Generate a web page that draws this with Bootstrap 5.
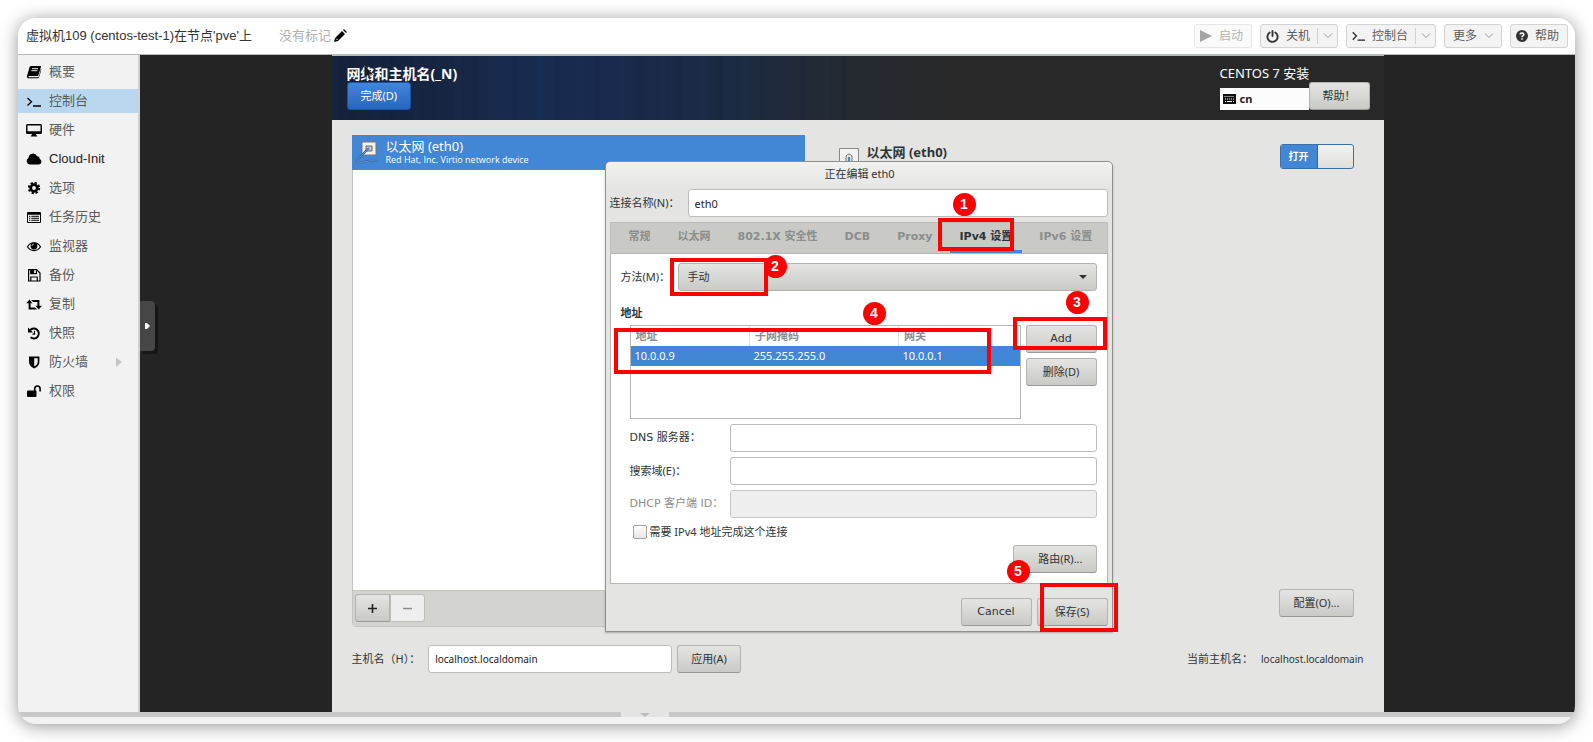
<!DOCTYPE html>
<html lang="zh-CN">
<head>
<meta charset="utf-8">
<meta name="viewport" content="width=device-width, initial-scale=1">
<title>centos-test-1 - 控制台</title>
<link href="https://cdn.jsdelivr.net/npm/bootstrap@5.3.0/dist/css/bootstrap.min.css" rel="stylesheet">
<style>
body{background:#fff;font:13px/20px "Liberation Sans","Noto Sans CJK SC",sans-serif;color:#000}
.shell{min-height:calc(100vh - 36px);margin:18px;border-radius:18px;background:#f2f2f2;box-shadow:0 2px 18px rgba(0,0,0,.42)}
.topbar{height:37px;background:#fff;border-bottom:1px solid #b9b9b9;padding:0 7px 0 8px;color:#333}
.muted{color:#b0b0b0;margin-left:27px;margin-right:2px}
.tool{height:24px;padding:0 5px;gap:7px;border:1px solid #d3d3d3;border-radius:3px;background:#f3f3f3;color:#5c5c5c;font-size:12px;line-height:20px;display:inline-flex;align-items:center;white-space:nowrap}
.tool.w-s{width:58px}
.tool.w-m{width:78px}
.tool.w-l{width:90px}
.tool svg{flex:none}
.tool:disabled{background:#fafafa;border-color:#e6e6e6;color:#b4b4b4;opacity:1}
.tool .split{border-left:1px solid #d0d0d0;height:16px;display:flex;align-items:center;padding-left:5px}
.side{width:122px;flex:none;border-right:2px solid #d0d0d0;padding:5px 0}
.side a{height:24px;margin-bottom:5px;padding-left:8px;color:#5a5a5a;text-decoration:none}
.side a.latin{color:#222}
.side a.active{background:#b9d8ef}
.side svg{width:16px;height:16px;margin-right:7px;flex:none}
.screen{background:#242424}
.drawer{top:246px;left:0;width:15px;height:50px;border:0;background:#464646;border-radius:0 4px 4px 0;box-shadow:3px 3px 0 #161616}
.drawer svg{display:block}
.vnc{width:100%;max-width:1052px;border-top:1px solid #b5bcbd;background:#e4e4e2;color:#2e3436;font:11px/16px "Noto Sans","Noto Sans CJK SC",sans-serif}
.vhead{padding:9px 14px 10px 15px;color:#fff;background:repeating-linear-gradient(90deg,rgba(30,70,130,.05) 0 6px,transparent 6px 17px,rgba(5,15,40,.07) 17px 22px,transparent 22px 41px) 0 0/520px 100% no-repeat,linear-gradient(90deg,#16213a 0,#172644 130px,#182c50 210px,#19294a 300px,#1c2a42 400px,#232a33 500px,#282828 620px)}
.vtitle{font-size:13px;line-height:17px}
.vtitle.page-name{font-size:14px}
.pointer{left:17px;top:0}
.gbtn{height:28px;border:1px solid #b3b3b0;border-bottom-color:#989896;border-radius:3px;background:linear-gradient(#e4e4e2,#c9c9c6);color:#2e3436;padding:0 13px;font-size:11px;line-height:16px}
.gbtn.primary{background:linear-gradient(#3f87dc,#2767be);border-color:#1d53a0;color:#fff}
.kbd-box{width:89px;height:22px;background:#fcfcfc;color:#222;padding-left:3px;font-weight:700}
.vbody{padding:15px 20px 39px}
.devlist{width:453px;flex:none;border:1px solid #c4c4c1;border-radius:0 0 4px 4px;background:#fff}
.dev{height:35px;margin:-1px -1px 0;background:#4286d6;color:#fff;padding-left:3px}
.dev svg{margin-right:7px}
.dev .big{font-size:13px;line-height:15px}
.dev .tiny{font:9px/12px "Open Sans","Noto Sans",sans-serif}
.devbar{height:36px;padding:3px 2px;background:#d3d4cf;border-top:1px solid #c6c7c2}
.sq{width:35px;padding:0;border-radius:3px 0 0 3px}
.sq:disabled{border-radius:0 3px 3px 0;background:#eee;border-color:#bcbcba;color:#8b8e8f}
.sq svg{display:block;margin:auto}
.detail{padding:9px 10px 10px 34px}
.onoff{width:74px;height:25px;border:1px solid #3c6fa8;border-radius:3px;background:linear-gradient(#f2f2f1,#dfdfdd);overflow:hidden}
.onoff b{width:37px;background:#4286d6;color:#fff;border-right:1px solid #3465a4;line-height:22px;text-align:center;font-size:10px}
.gin{height:28px;border:1px solid #bcbcba;border-radius:3px;background:#fff;padding:0 6px;font-size:11px;line-height:16px;color:#1d2123}
.gin:disabled{background:#eee;border-color:#c6c6c4}
.hostrow{margin-top:18px}
.hostrow .gin{width:244px;margin-right:5px}
.hostrow .gin,.hostrow .host{font-size:10px}
.hostrow .host{margin-left:8px}
.dlg{left:273px;top:105px;width:508px;border:1px solid #8f8f8d;border-radius:5px 5px 0 0;background:linear-gradient(#f2f2f1,#e4e4e2 28px);padding:0 4px 5px;box-shadow:0 1px 2px rgba(0,0,0,.25)}
.dlg-title{height:23px;margin-bottom:4px;padding-left:2px}
.w-name{width:78px}
.tabs{height:31px;margin-top:5px;padding-left:8px;gap:7px;background:#c9c9c6;border:1px solid #bcbcb9;border-bottom:0;font-weight:700;font-family:"DejaVu Sans","Noto Sans CJK SC",sans-serif}
.tabs button{border:0;background:none;color:#8b8d8b;font-weight:700;padding:0 10px;border-bottom:3px solid transparent;white-space:nowrap}
.tabs button.active{color:#2e3436;border-bottom-color:#4286d6}
.pane{border:1px solid #b6b6b3;background:#fff;padding:9px 10px 10px}
.w-method{width:57px}
.gsel{appearance:none;height:28px;border:1px solid #b3b3b0;border-radius:3px;color:#2e3436;padding:0 9px;font-size:11px;background:url("data:image/svg+xml,%3Csvg xmlns='http://www.w3.org/2000/svg' width='8' height='5'%3E%3Cpath d='M0 0h8L4 4z' fill='%232e3436'/%3E%3C/svg%3E") no-repeat right 9px center,linear-gradient(#e4e4e2,#c9c9c6)}
.h-addr{margin:14px 0 4px;font-size:11px;line-height:16px;font-weight:700}
.inset{padding-left:9px}
.addr{height:94px;border:1px solid #b6b6b3}
.addr table{width:100%;border-collapse:collapse;table-layout:fixed}
.addr th{height:20px;padding:0 5px;color:#8b8d8b;border-right:1px solid #e0e0de}
.addr th:last-child{border:0}
.addr td{height:20px;padding:0 4px;background:#4286d6;color:#fff}
.c-addr{width:119px}
.c-mask{width:149px}
.gap5{gap:5px}
.fields{margin-top:5px}
.need{height:27px}
.w-act{width:71px;padding:0}
.w-lab{width:100px;flex:none}
.dim{color:#8b8e8f}
.dj{font-family:"DejaVu Sans","Noto Sans CJK SC",sans-serif}
.tick{appearance:none;width:14px;height:14px;margin:0 3px 0 3px;border:1px solid #a3a3a1;border-radius:2px;background:linear-gradient(#fff,#e6e6e4)}
.foot{padding-top:14px;gap:5px}
.ring{border:4px solid #f00;pointer-events:none;z-index:3}
.dot{width:23px;height:23px;border-radius:50%;background:#f00;color:#fff;font:700 14px/23px "Liberation Sans",sans-serif;text-align:center;z-index:4}
.r1{inset:-5px 8px -1px -12px}.d1{left:3px;top:-30px}
.r2{left:-8px;top:-5px;width:98px;height:38px}.d2{left:86px;top:-8px}
.r3{inset:-8px -10px 3px -13px}.d3{left:40px;top:-34px}
.r4{left:-17px;top:2px;width:377px;height:46px}.d4{left:232px;top:-24px}
.r5{inset:-15px -10px -6px 3px}.d5{left:-30px;top:-38px}
.grip{height:5px;background:#c8c8c8}
.grip span{width:48px;height:5px;background:#e4e4e4;margin-left:603px;display:block}
.grip svg{display:block;margin:auto}
.base{height:7px}
</style>
</head>
<body>
<main class="shell d-flex flex-column overflow-hidden">
  <header class="topbar d-flex align-items-center">
    <span>虚拟机109 (centos-test-1)在节点'pve'上</span>
    <span class="muted">没有标记</span>
    <svg width="14" height="14" viewBox="0 0 14 14" aria-label="编辑"><path d="M1 13l1-4 7-7 3 3-7 7zM10 1l1-1 3 3-1 1z"/><path d="M3 9.500l1.500 1.500" stroke="#fff"/></svg>
    <div class="ms-auto d-flex gap-2">
      <button class="tool w-s" disabled><svg width="12" height="12" viewBox="0 0 12 12"><path d="M0 0l12 6-12 6z" fill="#a5a5a5"/></svg>启动</button>
      <button class="tool w-m"><svg width="13" height="13" viewBox="0 0 14 14" fill="none" stroke="#333" stroke-width="2" stroke-linecap="round"><path d="M4 2.700a5.500 5.500 0 1 0 6 0M7 1v5.500"/></svg>关机<span class="split"><svg width="10" height="6" viewBox="0 0 10 6" fill="none" stroke="#999"><path d="M1 .5l4 4 4-4"/></svg></span></button>
      <button class="tool w-l"><svg width="13" height="12" viewBox="0 0 14 12" fill="none" stroke="#222" stroke-width="1.300"><path d="M.8 2l4 4-4 4M6 10.500h8"/></svg>控制台<span class="split"><svg width="10" height="6" viewBox="0 0 10 6" fill="none" stroke="#999"><path d="M1 .5l4 4 4-4"/></svg></span></button>
      <button class="tool w-s ps-2">更多<svg width="10" height="6" viewBox="0 0 10 6" fill="none" stroke="#999"><path d="M1 .5l4 4 4-4"/></svg></button>
      <button class="tool w-s"><svg width="12" height="12" viewBox="0 0 12 12"><circle cx="6" cy="6" r="6" fill="#333"/><path d="M4.200 4.600C4.200 2.400 7.800 2.400 7.800 4.600 7.800 5.800 6 5.700 6 7.200M6 8.300v1.500" stroke="#fff" stroke-width="1.500" fill="none"/></svg>帮助</button>
    </div>
  </header>
  <div class="d-flex flex-grow-1">
    <nav class="side">
      <a href="#" class="d-flex align-items-center"><svg viewBox="0 0 16 16"><path d="M5 2h9.500q.7 0 .5.800L12.500 11q-.3.900-1 .9H3.200q-.9 0-.9.700 0 .6.900.6h9.300L15 5l.4.400L13 13.500q-.3.800-1 .8H3q-2.300 0-2-2.300L3.600 3Q4 2 5 2z"/><path d="M6 4.700h6M5.400 6.700h6" stroke="#f2f2f2"/></svg>概要</a>
      <a href="#" class="d-flex align-items-center active" aria-current="page"><svg viewBox="0 0 16 16" fill="none" stroke="#000" stroke-width="1.300"><path d="M1.500 5l4 3.700-4 3.700M7 13h8"/></svg>控制台</a>
      <a href="#" class="d-flex align-items-center"><svg viewBox="0 0 16 16"><path d="M1.500 2h13Q16 2 16 3.500v7q0 1.500-1.500 1.500H10l.5 1.500h.7v1H4.800v-1h.7L6 12H1.500Q0 12 0 10.500v-7Q0 2 1.500 2zm0 1.500v5.700h13V3.500z"/></svg>硬件</a>
      <a href="#" class="d-flex align-items-center latin"><svg viewBox="0 0 16 16"><path d="M3.500 13.500a3.500 3.500 0 0 1-1-6.500 4.500 4.500 0 0 1 8.600-1.800 2.400 2.400 0 0 1 2.500 2.900 2.800 2.800 0 0 1-.6 5.400z"/></svg>Cloud-Init</a>
      <a href="#" class="d-flex align-items-center"><svg viewBox="0 0 16 16" fill="none" stroke="#000"><circle cx="8" cy="8" r="3.300" stroke-width="2.700"/><circle cx="8" cy="8" r="5.200" stroke-width="2" stroke-dasharray="2.200 1.884"/></svg>选项</a>
      <a href="#" class="d-flex align-items-center"><svg viewBox="0 0 16 16"><path d="M2 3h12q1 0 1 1v9q0 1-1 1H2q-1 0-1-1V4q0-1 1-1zm0 2.700v7.300h12V5.700z"/><path d="M3 7.300h1.300M5.300 7.300H13M3 9.300h1.300M5.300 9.300H13M3 11.300h1.300M5.300 11.300H13" stroke="#000"/></svg>任务历史</a>
      <a href="#" class="d-flex align-items-center"><svg viewBox="0 0 16 16"><path d="M1.500 8.700C4.500 3.400 11.500 3.400 14.500 8.700 11.500 13.800 4.500 13.800 1.500 8.700z" fill="none" stroke="#000" stroke-width="1.200"/><circle cx="8" cy="8" r="3.400"/><path d="M6 8a2 2 0 0 1 2-2" fill="none" stroke="#f2f2f2" stroke-width=".7"/></svg>监视器</a>
      <a href="#" class="d-flex align-items-center"><svg viewBox="0 0 16 16" fill="none" stroke="#000" stroke-width="1.200"><path d="M2.600 2.600h8L14 6v8H2.600zM4.800 14v-4h6.500v4"/><path d="M4.800 2.600v4h5.700v-4"/><path d="M5 3h2.500v3.500H5z" fill="#000"/></svg>备份</a>
      <a href="#" class="d-flex align-items-center"><svg viewBox="0 0 16 16"><path d="M3.500 3.500L6.500 7.200H4.600v4.300H9l2 2H2.600V7.200H.3zM12.700 13.500L9.500 9.800h1.900V6H7L5.200 4h8.200v5.800H16z"/></svg>复制</a>
      <a href="#" class="d-flex align-items-center"><svg viewBox="0 0 16 16" fill="none" stroke="#000" stroke-width="1.900"><path d="M4 5.300A5 5 0 1 1 4.500 12.300"/><path d="M2 2.500v5h5z" fill="#000" stroke="none"/><path d="M8.500 5.800v3.300H6.500" stroke-width="1.200"/></svg>快照</a>
      <a href="#" class="d-flex align-items-center"><svg viewBox="0 0 16 16"><path d="M3 2.500h10.400V8c0 3-2 5-5.200 6.500C5 13 3 11 3 8zm5.200 1.700v8.200C10.500 11.200 11.700 9.800 11.700 8V4.200z"/></svg>防火墙<svg viewBox="0 0 16 16" class="ms-auto"><path d="M1 3.500L7 8l-6 5z" fill="#c4c4c4"/></svg></a>
      <a href="#" class="d-flex align-items-center"><svg viewBox="0 0 16 16"><rect x="1" y="7.500" width="9.500" height="6.500" rx="1"/><path d="M8.700 8V5.700a2.700 2.700 0 0 1 5.400 0V8.500" fill="none" stroke="#000" stroke-width="1.600"/></svg>权限</a>
    </nav>
    <div class="screen flex-grow-1 d-flex position-relative">
      <button class="drawer position-absolute p-0" aria-label="展开"><svg width="15" height="8" viewBox="0 0 15 8"><path d="M5 1h2l3 3-3 3H5z" fill="#fff"/></svg></button>
      <section class="vnc mx-auto d-flex flex-column position-relative">
        <div class="vhead d-flex justify-content-between">
          <div>
            <div class="vtitle page-name fw-bold position-relative">网络和主机名(_N)<svg class="pointer position-absolute" width="10" height="15" viewBox="0 0 10 15"><path d="M.5.500v12l3-2.500 2 4.500 1.500-1-2-4H9z" fill="#1a1a1a" stroke="#777" stroke-width=".5"/></svg></div>
            <button class="gbtn primary">完成(D)</button>
          </div>
          <div>
            <div class="vtitle">CENTOS 7 安装</div>
            <div class="d-flex align-items-end">
              <div class="kbd-box d-flex align-items-center gap-1"><svg width="13" height="10" viewBox="0 0 13 10"><path d="M0 0h13v10H0z" fill="#111"/><path d="M1.500 2.500h10M2 5h9" stroke="#fff" stroke-dasharray="1 1"/><path d="M2 7.500h1M4 7.500h5M10 7.500h1" stroke="#fff"/></svg>cn</div>
              <button class="gbtn">帮助！</button>
            </div>
          </div>
        </div>
        <div class="vbody d-flex flex-column flex-grow-1">
          <div class="d-flex flex-grow-1">
            <div class="devlist d-flex flex-column">
              <div class="dev d-flex align-items-center">
                <svg width="24" height="26" viewBox="0 0 24 26"><rect x="7" y="2" width="14" height="13" fill="#f2f2ee" stroke="#777"/><path d="M11 11V6h6v5z" fill="#ccc" stroke="#666"/><path d="M14 8Q9 13 3 19-1 24 8 22q8-2 15-1" fill="none" stroke="#3465a4" stroke-width="2"/><path d="M14 8Q9 13 3 19-1 24 8 22q8-2 15-1" fill="none" stroke="#729fcf" stroke-width=".8"/></svg>
                <div><div class="big">以太网 (eth0)</div><div class="tiny">Red Hat, Inc. Virtio network device</div></div>
              </div>
              <div class="devbar mt-auto d-flex">
                <button class="gbtn sq" aria-label="添加"><svg width="9" height="9" viewBox="0 0 9 9"><path d="M0 4.500h9M4.500 0v9" stroke="#222" stroke-width="1.600"/></svg></button>
                <button class="gbtn sq" disabled aria-label="移除"><svg width="9" height="9" viewBox="0 0 9 9"><path d="M0 4.500h9" stroke="#888" stroke-width="1.500"/></svg></button>
              </div>
            </div>
            <div class="detail flex-grow-1 d-flex flex-column">
              <div class="d-flex align-items-start">
                <svg width="20" height="20" viewBox="0 0 20 20" class="mt-1"><path d="M.5.500h19v19H.5z" fill="#f3f3f1" stroke="#888"/><path d="M7 15V8q3-4 6 0v7" fill="#ddd" stroke="#777"/><path d="M10 9v8" stroke="#4286d6" stroke-width="2"/></svg>
                <strong class="vtitle ms-2">以太网 (eth0)</strong>
                <label class="onoff d-flex ms-auto"><input type="checkbox" role="switch" class="visually-hidden" checked><b>打开</b></label>
              </div>
              <button class="gbtn mt-auto align-self-end">配置(O)...</button>
            </div>
          </div>
          <div class="hostrow d-flex align-items-center">
            <label for="host" class="me-2">主机名（H）：</label>
            <input id="host" class="gin" value="localhost.localdomain">
            <button class="gbtn">应用(A)</button>
            <span class="ms-auto">当前主机名：</span><span class="host">localhost.localdomain</span>
          </div>
        </div>

        <div class="dlg position-absolute" role="dialog" aria-labelledby="dt">
          <div id="dt" class="dlg-title d-flex align-items-center justify-content-center">正在编辑 eth0</div>
          <div class="d-flex align-items-center"><label for="cn" class="w-name">连接名称(N)：</label><input id="cn" class="gin flex-grow-1" value="eth0"></div>
          <div class="tabs d-flex" role="tablist">
            <button role="tab">常规</button><button role="tab">以太网</button><button role="tab">802.1X 安全性</button><button role="tab">DCB</button><button role="tab">Proxy</button>
            <button role="tab" class="active position-relative">IPv4 设置<span class="ring r1 position-absolute"></span><span class="dot d1 position-absolute">1</span></button>
            <button role="tab">IPv6 设置</button>
          </div>
          <div class="pane">
            <div class="d-flex align-items-center">
              <label for="mt" class="w-method">方法(M)：</label>
              <div class="flex-grow-1 position-relative d-flex"><select id="mt" class="gsel w-100"><option>手动</option></select><span class="ring r2 position-absolute"></span><span class="dot d2 position-absolute">2</span></div>
            </div>
            <h2 class="h-addr">地址</h2>
            <div class="inset">
              <div class="d-flex gap5">
                <div class="addr flex-grow-1 position-relative">
                  <table><colgroup><col class="c-addr"><col class="c-mask"><col></colgroup>
                    <thead><tr><th>地址</th><th>子网掩码</th><th>网关</th></tr></thead>
                    <tbody><tr><td>10.0.0.9</td><td>255.255.255.0</td><td>10.0.0.1</td></tr></tbody></table>
                  <span class="ring r4 position-absolute"></span><span class="dot d4 position-absolute">4</span>
                </div>
                <div class="d-flex flex-column gap5">
                  <div class="position-relative"><button class="gbtn w-act dj">Add</button><span class="ring r3 position-absolute"></span><span class="dot d3 position-absolute">3</span></div>
                  <button class="gbtn w-act">删除(D)</button>
                </div>
              </div>
              <div class="fields d-flex flex-column gap5">
                <div class="d-flex align-items-center"><label for="dns" class="w-lab dj">DNS 服务器：</label><input id="dns" class="gin flex-grow-1"></div>
                <div class="d-flex align-items-center"><label for="sd" class="w-lab">搜索域(E)：</label><input id="sd" class="gin flex-grow-1"></div>
                <div class="d-flex align-items-center"><label for="dh" class="w-lab dim dj">DHCP 客户端 ID：</label><input id="dh" class="gin flex-grow-1" disabled></div>
              </div>
              <div class="need d-flex align-items-center"><input type="checkbox" id="rq" class="tick"><label for="rq">需要 IPv4 地址完成这个连接</label></div>
              <div class="d-flex justify-content-end"><button class="gbtn ps-4">路由(R)...</button></div>
            </div>
          </div>
          <div class="foot d-flex justify-content-end">
            <button class="gbtn w-act dj">Cancel</button>
            <div class="position-relative"><button class="gbtn w-act">保存(S)</button><span class="ring r5 position-absolute"></span><span class="dot d5 position-absolute">5</span></div>
          </div>
        </div>
      </section>
    </div>
  </div>
  <div class="grip"><span><svg width="10" height="5" viewBox="0 0 10 5"><path d="M0 1h10L5 5z" fill="#bbb"/></svg></span></div>
  <div class="base"></div>
</main>
<script src="https://cdn.jsdelivr.net/npm/bootstrap@5.3.0/dist/js/bootstrap.bundle.min.js"></script>
</body>
</html>
